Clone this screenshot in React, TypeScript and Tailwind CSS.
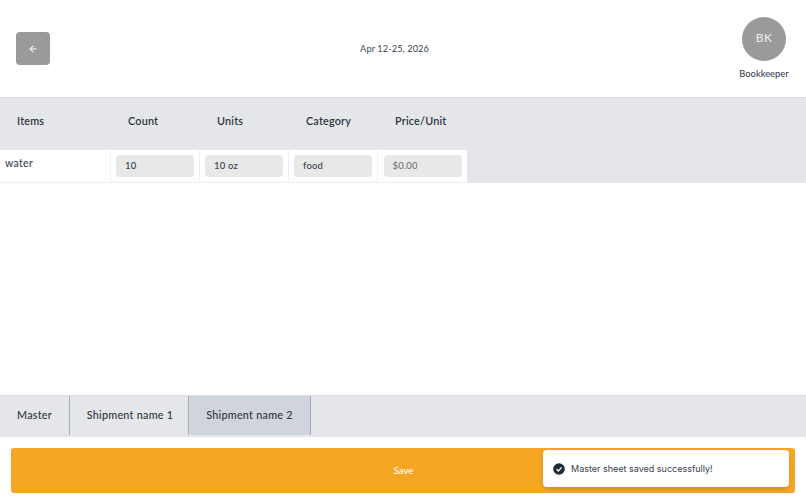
import { ArrowLeft } from "lucide-react";

const font = "font-['Lato','Liberation_Sans',sans-serif]";

const cells = [
  { value: "10", muted: false },
  { value: "10 oz", muted: false },
  { value: "food", muted: false },
  { value: "$0.00", muted: true },
];
const tabs = [
  { name: "Master", width: "w-[70px]", active: false },
  { name: "Shipment name 1", width: "w-[119px] pl-[2px]", active: false },
  { name: "Shipment name 2", width: "w-[122px]", active: true },
];

export default function App() {
  return (
    <div className={`relative flex h-[504px] w-[806px] flex-col overflow-hidden bg-white text-[#374151] ${font}`}>
      <header className="flex h-[97px] items-center justify-between pl-[16px] pr-[17px]">
        <button className="flex h-[33px] w-[34px] items-center justify-center rounded-[4px] bg-[#9a9a9a] text-white">
          <ArrowLeft size={10} strokeWidth={2.5} />
        </button>
        <p className="text-[9.2px] font-medium tracking-[0.1px] text-[#4b5563]">Apr 12-25, 2026</p>
        <div className="flex w-[50px] flex-col items-center gap-[6px]">
          <div className="flex h-11 w-11 shrink-0 items-center justify-center rounded-full bg-[#9a9a9a] pb-[2px] text-[12px] tracking-[0.3px] text-[#eeeeee]">BK</div>
          <p className="whitespace-nowrap text-[9.3px] font-medium text-[#374151]">Bookkeeper</p>
        </div>
      </header>

      <section className="h-[86px] border-t border-[#d9dbe0] bg-[#e4e6ea]">
        <div className="flex h-[52px] items-center pb-[5px] text-[10.8px] font-semibold tracking-[0.2px] text-[#2f3640]">
          <div className="w-[111px] pl-[17px]">Items</div>
          <div className="w-[89px] pl-[17px]">Count</div>
          <div className="w-[89px] pl-[17px]">Units</div>
          <div className="w-[89px] pl-[17px]">Category</div>
          <div className="w-[89px] pl-[17px]">Price/Unit</div>
        </div>
        <div className="flex h-[33px] w-[467px] border-b border-[#eeeeee] bg-white">
          <div className="w-[111px] border-r border-[#f0f0f0] pl-[5px] pt-[6px] text-[10.5px] font-medium tracking-[0.3px]">water</div>
          {cells.map((cell) => (
            <div key={cell.value} className="flex w-[89px] items-center justify-center border-r border-[#f0f0f0] last:border-r-0">
              <div className={`flex h-[22px] w-[78px] items-center rounded-[4px] bg-[#e8e8e8] pl-[9px] text-[9.5px] font-medium tracking-[0.2px] ${cell.muted ? "text-[#777777]" : "text-[#374151]"}`}>
                {cell.value}
              </div>
            </div>
          ))}
        </div>
      </section>

      <div className="flex-1" />

      <nav className="flex h-[42px] items-stretch border-t border-[#dcdee3] bg-[#e4e6ea] text-[10.8px] font-medium tracking-[0.25px] text-[#2f3640]">
        {tabs.map((tab) => (
          <div
            key={tab.name}
            className={`mb-[2px] flex items-center justify-center border-r border-[#a9aeb6] ${tab.width} ${tab.active ? "bg-[#d0d5dd]" : ""}`}
          >
            {tab.name}
          </div>
        ))}
      </nav>

      <div className="px-[11px] pb-[11px] pt-[11px]">
        <button className="flex h-[45px] w-full items-center justify-center rounded-[3px] bg-[#f5a623] pl-[1px] pt-[1px] text-[9.5px] font-medium text-white">
          Save
        </button>
      </div>

      <div className="absolute left-[543px] top-[450px] flex h-[37px] w-[246px] items-center gap-[6px] rounded-[4px] bg-white pl-[10px] font-['Inter',sans-serif] text-[9px] text-[#374151] shadow-md">
        <svg width="12" height="12" viewBox="0 0 12 12">
          <circle cx="6" cy="6" r="5.8" fill="#1f2937" />
          <path d="M3.5 6.2 5.3 8 8.6 4.4" fill="none" stroke="white" strokeWidth="1.3" />
        </svg>
        Master sheet saved successfully!
      </div>
    </div>
  );
}
